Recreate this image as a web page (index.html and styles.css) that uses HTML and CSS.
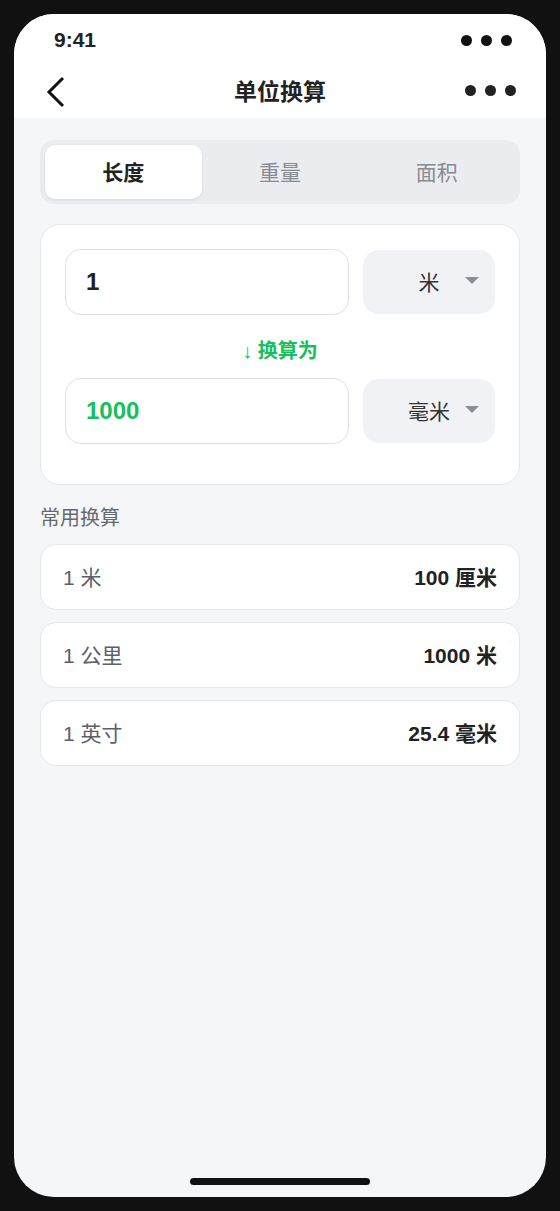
FILE: index.html
```html
<!DOCTYPE html>
<html lang="zh">
<head>
   <meta charset="utf-8"/>
   <title>单位换算</title>
   <link rel="stylesheet" href="styles.css">
</head>
<body>
   <div class="phone">
      <div class="status">
         <span class="time">9:41</span>
         <div class="dots"><i></i><i></i><i></i></div>
      </div>
      <div class="nav">
         <svg class="back" width="24" height="34" viewBox="0 0 24 34">
            <path d="M17 3 L3 17 L17 31" fill="none" stroke="#111" stroke-width="3"/>
         </svg>
         <div class="title">单位换算</div>
         <div class="dots"><i></i><i></i><i></i></div>
      </div>
      <div class="content">
         <div class="tabs">
            <div class="tab active">长度</div>
            <div class="tab">重量</div>
            <div class="tab">面积</div>
         </div>
         <div class="card">
            <div class="row">
               <div class="input">1</div>
               <div class="select"><span>米</span><b class="caret"></b></div>
            </div>
            <div class="to">↓ 换算为</div>
            <div class="row">
               <div class="input result">1000</div>
               <div class="select"><span>毫米</span><b class="caret"></b></div>
            </div>
         </div>
         <div class="section">常用换算</div>
         <div class="list">
            <div class="item"><span>1 米</span><strong>100 厘米</strong></div>
            <div class="item"><span>1 公里</span><strong>1000 米</strong></div>
            <div class="item"><span>1 英寸</span><strong>25.4 毫米</strong></div>
         </div>
      </div>
      <div class="home"></div>
   </div>
</body>
</html>
```

FILE: styles.css
```css
body {
   margin:0;
   background-color:#111;
   font-family:"Liberation Sans","Noto Sans CJK SC",sans-serif;
   color:#222;
}
.phone {
   margin:14px;
   width:532px;
   height:1183px;
   border-radius:40px;
   overflow:hidden;
   background-color:#f5f6f8;
   display:flex;
   flex-direction:column;
}
.status {
   height:48px;
   background:#fff;
   display:flex;
   align-items:center;
   justify-content:space-between;
   padding:4px 34px 0 40px;
   box-sizing:border-box;
}
.time {
   font-size:21px;
   font-weight:bold;
   color:#222;
}
.dots {
   display:flex;
   gap:9px;
}
.dots i {
   width:11px;
   height:11px;
   border-radius:50%;
   background:#111;
}
.nav {
   height:56px;
   background:#fff;
   display:flex;
   align-items:center;
   justify-content:space-between;
   padding:0 30px 0 32px;
   position:relative;
}
.nav .dots i {
   background:#222;
}
.back {
   display:block;
   margin-top:4px;
}
.title {
   position:absolute;
   left:0;
   right:0;
   text-align:center;
   font-size:23px;
   font-weight:bold;
   color:#222;
   pointer-events:none;
}
.content {
   padding:22px 26px 0;
}
.tabs {
   display:flex;
   height:64px;
   padding:5px;
   box-sizing:border-box;
   background:#ebecf0;
   border-radius:14px;
}
.tab {
   flex:1;
   display:flex;
   align-items:center;
   justify-content:center;
   padding-bottom:3px;
   font-size:21px;
   color:#888b92;
   border-radius:10px;
}
.tab.active {
   background:#fff;
   color:#222;
   font-weight:bold;
   box-shadow:0 1px 3px rgba(0,0,0,0.08);
}
.card {
   margin-top:20px;
   background:#fff;
   border:1px solid #e6e7ea;
   border-radius:20px;
   padding:24px 24px 40px;
}
.row {
   display:flex;
   align-items:center;
   gap:14px;
}
.input {
   flex:1;
   height:64px;
   border:1px solid #e0e1e4;
   border-radius:16px;
   display:flex;
   align-items:center;
   padding-left:20px;
   font-size:24px;
   font-weight:bold;
   color:#222;
}
.input.result {
   color:#14c15b;
}
.select {
   width:132px;
   height:64px;
   background:#f1f2f5;
   border-radius:16px;
   display:flex;
   align-items:center;
   justify-content:center;
   padding-bottom:2px;
   box-sizing:border-box;
   position:relative;
   font-size:21px;
   color:#333;
}
.caret {
   position:absolute;
   right:16px;
   top:27px;
   width:0;
   height:0;
   border-left:7px solid transparent;
   border-right:7px solid transparent;
   border-top:7px solid #8a8d96;
}
.to {
   height:63px;
   display:flex;
   align-items:center;
   justify-content:center;
   padding-top:6px;
   box-sizing:border-box;
   font-size:20px;
   font-weight:bold;
   color:#14c15b;
}
.section {
   margin:20px 0 13px;
   line-height:26px;
   font-size:20px;
   color:#666a70;
}
.list {
   display:flex;
   flex-direction:column;
   gap:12px;
}
.item {
   height:66px;
   box-sizing:border-box;
   background:#fff;
   border:1px solid #e6e7ea;
   border-radius:16px;
   display:flex;
   align-items:center;
   justify-content:space-between;
   padding:0 22px 3px;
   font-size:21px;
}
.item span {
   color:#5c6068;
}
.item strong {
   color:#222;
}
.home {
   margin:auto auto 12px;
   width:180px;
   height:7px;
   border-radius:4px;
   background:#111;
}
```
